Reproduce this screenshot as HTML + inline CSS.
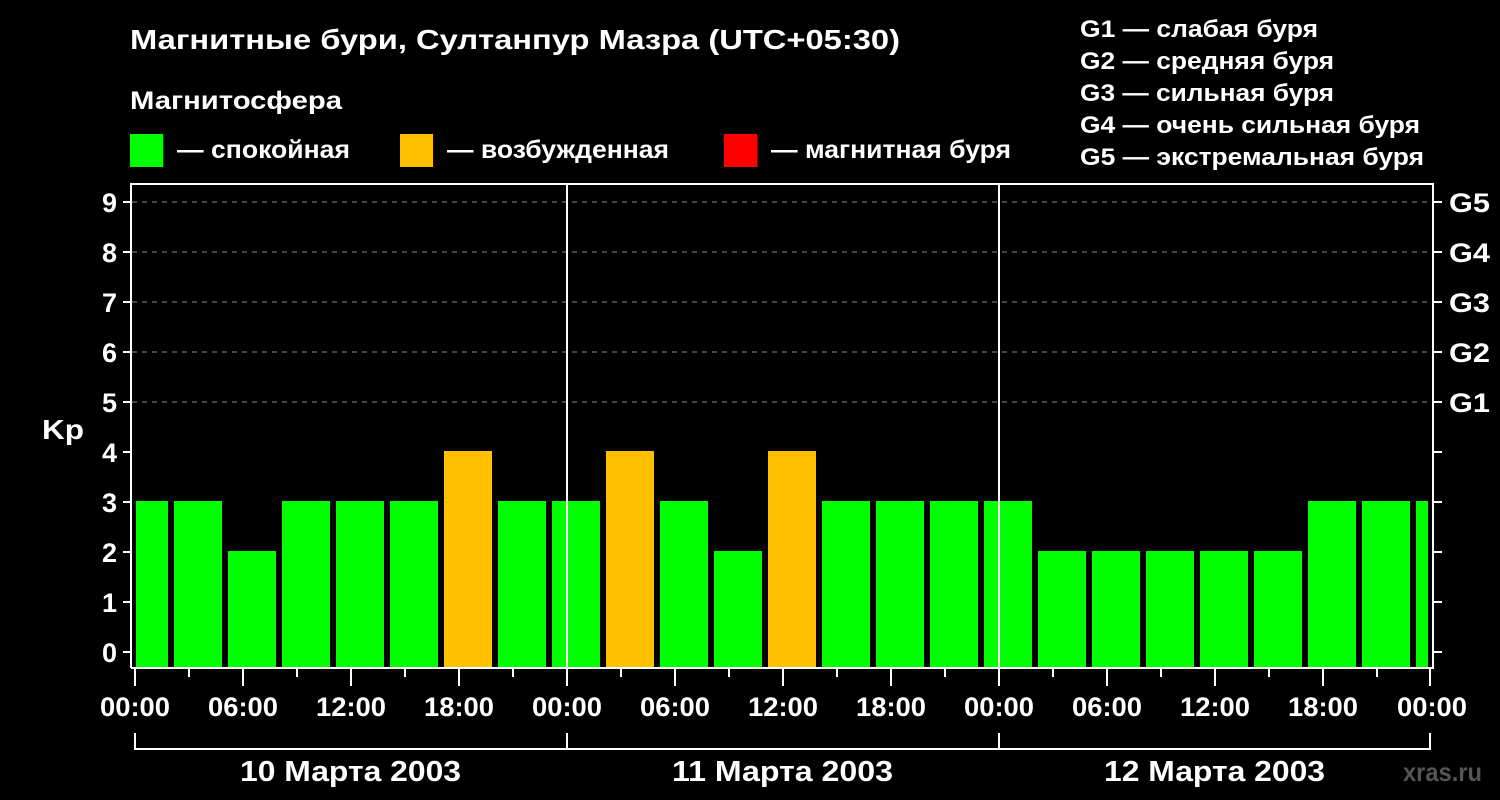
<!DOCTYPE html>
<html><head><meta charset="utf-8"><style>
html,body{margin:0;padding:0;background:#000;width:1500px;height:800px;overflow:hidden}
svg{display:block}
text{font-family:"Liberation Sans",sans-serif;font-weight:bold;fill:#fff}
</style></head><body>
<svg width="1500" height="800" viewBox="0 0 1500 800">
<text x="130" y="49" font-size="28" textLength="770" lengthAdjust="spacingAndGlyphs">Магнитные бури, Султанпур Мазра (UTC+05:30)</text>
<text x="130" y="109" font-size="25" textLength="212" lengthAdjust="spacingAndGlyphs">Магнитосфера</text>
<rect x="130" y="134" width="33" height="33" fill="#00ff00"/>
<text x="177" y="158" font-size="25" textLength="173" lengthAdjust="spacingAndGlyphs">— спокойная</text>
<rect x="400" y="134" width="33" height="33" fill="#ffc000"/>
<text x="447" y="158" font-size="25" textLength="222" lengthAdjust="spacingAndGlyphs">— возбужденная</text>
<rect x="724" y="134" width="33" height="33" fill="#ff0000"/>
<text x="771" y="158" font-size="25" textLength="240" lengthAdjust="spacingAndGlyphs">— магнитная буря</text>
<text x="1080" y="37" font-size="24" textLength="238" lengthAdjust="spacingAndGlyphs">G1 — слабая буря</text>
<text x="1080" y="69" font-size="24" textLength="254" lengthAdjust="spacingAndGlyphs">G2 — средняя буря</text>
<text x="1080" y="101" font-size="24" textLength="254" lengthAdjust="spacingAndGlyphs">G3 — сильная буря</text>
<text x="1080" y="133" font-size="24" textLength="340" lengthAdjust="spacingAndGlyphs">G4 — очень сильная буря</text>
<text x="1080" y="165" font-size="24" textLength="344" lengthAdjust="spacingAndGlyphs">G5 — экстремальная буря</text>
<g stroke="#888" stroke-width="1" stroke-dasharray="5,5">
<line x1="132" y1="202" x2="1432" y2="202"/><line x1="132" y1="252" x2="1432" y2="252"/>
<line x1="132" y1="302" x2="1432" y2="302"/><line x1="132" y1="352" x2="1432" y2="352"/>
<line x1="132" y1="402" x2="1432" y2="402"/>
</g>
<g>
<rect x="136" y="501" width="32" height="167" fill="#00ff00"/>
<rect x="174" y="501" width="48" height="167" fill="#00ff00"/>
<rect x="228" y="551" width="48" height="117" fill="#00ff00"/>
<rect x="282" y="501" width="48" height="167" fill="#00ff00"/>
<rect x="336" y="501" width="48" height="167" fill="#00ff00"/>
<rect x="390" y="501" width="48" height="167" fill="#00ff00"/>
<rect x="444" y="451" width="48" height="217" fill="#ffc000"/>
<rect x="498" y="501" width="48" height="167" fill="#00ff00"/>
<rect x="552" y="501" width="48" height="167" fill="#00ff00"/>
<rect x="606" y="451" width="48" height="217" fill="#ffc000"/>
<rect x="660" y="501" width="48" height="167" fill="#00ff00"/>
<rect x="714" y="551" width="48" height="117" fill="#00ff00"/>
<rect x="768" y="451" width="48" height="217" fill="#ffc000"/>
<rect x="822" y="501" width="48" height="167" fill="#00ff00"/>
<rect x="876" y="501" width="48" height="167" fill="#00ff00"/>
<rect x="930" y="501" width="48" height="167" fill="#00ff00"/>
<rect x="984" y="501" width="48" height="167" fill="#00ff00"/>
<rect x="1038" y="551" width="48" height="117" fill="#00ff00"/>
<rect x="1092" y="551" width="48" height="117" fill="#00ff00"/>
<rect x="1146" y="551" width="48" height="117" fill="#00ff00"/>
<rect x="1200" y="551" width="48" height="117" fill="#00ff00"/>
<rect x="1254" y="551" width="48" height="117" fill="#00ff00"/>
<rect x="1308" y="501" width="48" height="167" fill="#00ff00"/>
<rect x="1362" y="501" width="48" height="167" fill="#00ff00"/>
<rect x="1416" y="501" width="12" height="167" fill="#00ff00"/>
</g>
<g stroke="#fff" stroke-width="2" fill="none">
<path d="M131 668 V184 H1433 V668 H131"/>
<line x1="567" y1="183" x2="567" y2="668"/><line x1="999" y1="183" x2="999" y2="668"/>
<path d="M123 202H131M123 252H131M123 302H131M123 352H131M123 402H131M123 452H131M123 502H131M123 552H131M123 602H131M123 652H131"/>
<path d="M1433 202H1442M1433 252H1442M1433 302H1442M1433 352H1442M1433 402H1442M1433 452H1442M1433 502H1442M1433 552H1442M1433 602H1442M1433 652H1442"/>
<path d="M135 669V686M243 669V686M351 669V686M459 669V686M567 669V686M675 669V686M783 669V686M891 669V686M999 669V686M1107 669V686M1215 669V686M1323 669V686M1430 669V686"/>
<path d="M189 669V677M297 669V677M405 669V677M513 669V677M621 669V677M729 669V677M837 669V677M945 669V677M1053 669V677M1161 669V677M1269 669V677M1377 669V677"/>
<path d="M135 733V749H1430V733M567 733V749M999 733V749"/>
</g>
<g font-size="27" text-anchor="end">
<text x="117" y="212">9</text><text x="117" y="262">8</text><text x="117" y="312">7</text>
<text x="117" y="362">6</text><text x="117" y="412">5</text><text x="117" y="462">4</text>
<text x="117" y="512">3</text><text x="117" y="562">2</text><text x="117" y="612">1</text>
<text x="117" y="662">0</text>
</g>
<text x="42" y="439" font-size="28" textLength="42" lengthAdjust="spacingAndGlyphs">Kp</text>
<g font-size="27">
<text x="1449" y="212" textLength="41" lengthAdjust="spacingAndGlyphs">G5</text>
<text x="1449" y="262" textLength="41" lengthAdjust="spacingAndGlyphs">G4</text>
<text x="1449" y="312" textLength="41" lengthAdjust="spacingAndGlyphs">G3</text>
<text x="1449" y="362" textLength="41" lengthAdjust="spacingAndGlyphs">G2</text>
<text x="1449" y="412" textLength="41" lengthAdjust="spacingAndGlyphs">G1</text>
</g>
<g font-size="27">
<text x="100" y="716" textLength="70" lengthAdjust="spacingAndGlyphs">00:00</text>
<text x="208" y="716" textLength="70" lengthAdjust="spacingAndGlyphs">06:00</text>
<text x="316" y="716" textLength="70" lengthAdjust="spacingAndGlyphs">12:00</text>
<text x="424" y="716" textLength="70" lengthAdjust="spacingAndGlyphs">18:00</text>
<text x="532" y="716" textLength="70" lengthAdjust="spacingAndGlyphs">00:00</text>
<text x="640" y="716" textLength="70" lengthAdjust="spacingAndGlyphs">06:00</text>
<text x="748" y="716" textLength="70" lengthAdjust="spacingAndGlyphs">12:00</text>
<text x="856" y="716" textLength="70" lengthAdjust="spacingAndGlyphs">18:00</text>
<text x="964" y="716" textLength="70" lengthAdjust="spacingAndGlyphs">00:00</text>
<text x="1072" y="716" textLength="70" lengthAdjust="spacingAndGlyphs">06:00</text>
<text x="1180" y="716" textLength="70" lengthAdjust="spacingAndGlyphs">12:00</text>
<text x="1288" y="716" textLength="70" lengthAdjust="spacingAndGlyphs">18:00</text>
<text x="1397" y="716" textLength="70" lengthAdjust="spacingAndGlyphs">00:00</text>
<text x="240" y="781" font-size="29" textLength="221" lengthAdjust="spacingAndGlyphs">10 Марта 2003</text>
<text x="672" y="781" font-size="29" textLength="221" lengthAdjust="spacingAndGlyphs">11 Марта 2003</text>
<text x="1104" y="781" font-size="29" textLength="221" lengthAdjust="spacingAndGlyphs">12 Марта 2003</text>
</g>
<text x="1403" y="781" font-size="26" textLength="79" lengthAdjust="spacingAndGlyphs" style="fill:#555">xras.ru</text>
</svg>
</body></html>
